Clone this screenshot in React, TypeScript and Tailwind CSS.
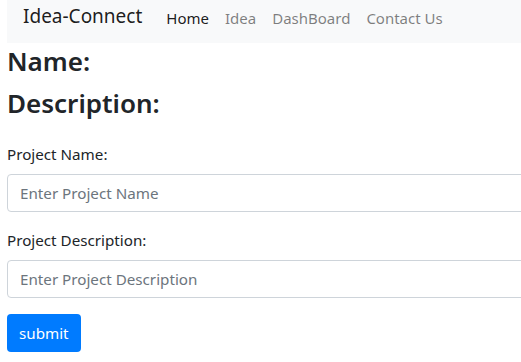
import React from 'react';

const links = [
  { label: 'Home', active: true },
  { label: 'Idea', active: false },
  { label: 'DashBoard', active: false },
  { label: 'Contact Us', active: false },
];

export default function App() {
  return (
    <div className="min-h-[362px] w-[521px] overflow-hidden bg-white font-['Segoe_UI','Noto_Sans',sans-serif] text-[#212529]">
      <div className="w-[620px] pl-[7px]">
        <nav className="flex h-[43px] items-start bg-[#f8f9fa] px-4">
          <a href="#" className="mr-4 mt-[1px] text-[19px] leading-[30px] text-black/90">
            Idea-Connect
          </a>
          <ul className="mt-[6px] flex">
            {links.map((link) => (
              <li key={link.label}>
                <a
                  href="#"
                  className={`block px-2 text-[15px] leading-[24px] ${
                    link.active ? 'text-black/90' : 'text-black/50'
                  }`}
                >
                  {link.label}
                </a>
              </li>
            ))}
          </ul>
        </nav>

        <h3 className="mb-[6px] pt-[2px] text-[26px] font-semibold leading-[33.6px]">Name:</h3>
        <h3 className="mb-[6px] pt-[2px] text-[26px] font-semibold leading-[33.6px]">Description:</h3>

        <form className="pt-[16px]">
          <div className="mb-4">
            <label className="mb-2 block text-[15.2px] leading-[24px]">Project Name:</label>
            <input
              type="text"
              placeholder="Enter Project Name"
              className="block h-[38px] w-full rounded-[4px] border border-[#ced4da] px-3 text-[15.2px] text-[#495057] placeholder:text-[#6c757d]"
            />
          </div>
          <div className="mb-4">
            <label className="mb-2 block text-[15.2px] leading-[24px]">Project Description:</label>
            <input
              type="text"
              placeholder="Enter Project Description"
              className="block h-[38px] w-full rounded-[4px] border border-[#ced4da] px-3 text-[15.2px] text-[#495057] placeholder:text-[#6c757d]"
            />
          </div>
          <button
            type="submit"
            className="h-[38px] rounded-[4px] bg-[#007bff] px-3 text-[15.2px] leading-[24px] text-white"
          >
            submit
          </button>
        </form>
      </div>
    </div>
  );
}
